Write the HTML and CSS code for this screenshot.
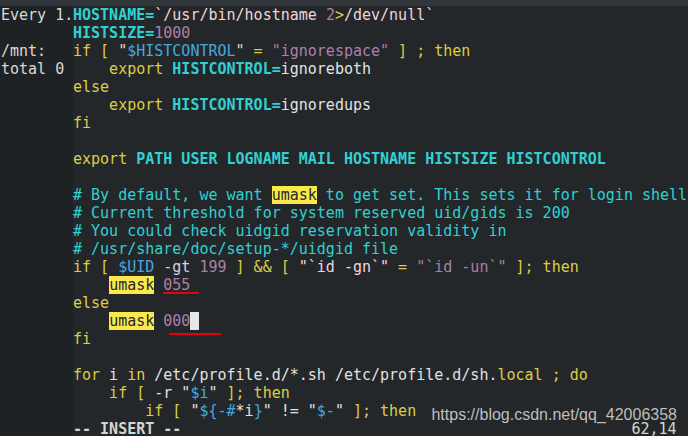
FILE: index.html
```html
<!DOCTYPE html>
<html lang="en">
<head>
    <meta charset="UTF-8">
    <title>vim /etc/profile</title>
    <link rel="stylesheet" href="styles.css">
</head>
<body>
    <div class="topbar"></div>
    <div class="panes">
        <div class="watch-pane">
            <div class="line">Every 1.</div>
            <div class="line"></div>
            <div class="line">/mnt:</div>
            <div class="line">total 0</div>
        </div>

        <div class="vim-pane">
            <div class="line"><span class="var">HOSTNAME=</span><span class="sub">`/usr/bin/hostname </span><span class="num">2</span><span class="kw">&gt;</span><span class="sub">/dev/null`</span></div>
            <div class="line"><span class="var">HISTSIZE=</span><span class="num">1000</span></div>
            <div class="line"><span class="kw">if [ </span><span class="sub">"</span><span class="ref">$HISTCONTROL</span><span class="sub">"</span><span class="kw"> = </span><span class="num">"ignorespace"</span><span class="kw"> ] ; then</span></div>
            <div class="line"><span class="kw">    export </span><span class="var">HISTCONTROL=</span><span class="txt">ignoreboth</span></div>
            <div class="line"><span class="kw">else</span></div>
            <div class="line"><span class="kw">    export </span><span class="var">HISTCONTROL=</span><span class="txt">ignoredups</span></div>
            <div class="line"><span class="kw">fi</span></div>
            <div class="line"></div>
            <div class="line"><span class="kw">export</span><span class="var"> PATH USER LOGNAME MAIL HOSTNAME HISTSIZE HISTCONTROL</span></div>
            <div class="line"></div>
            <div class="line comment"># By default, we want <span class="search">umask</span> to get set. This sets it for login shell</div>
            <div class="line comment"># Current threshold for system reserved uid/gids is 200</div>
            <div class="line comment"># You could check uidgid reservation validity in</div>
            <div class="line comment"># /usr/share/doc/setup-*/uidgid file</div>
            <div class="line"><span class="kw">if [ </span><span class="ref">$UID</span><span class="opt"> -gt </span><span class="num">199</span><span class="kw"> ] &amp;&amp; [ </span><span class="sub">"`id -gn`"</span><span class="kw"> = </span><span class="num">"`id -un`"</span><span class="kw"> ]; then</span></div>
            <div class="line">    <span class="search">umask</span> <span class="marked short"><span class="num">055</span> </span></div>
            <div class="line"><span class="kw">else</span></div>
            <div class="line">    <span class="search">umask</span> <span class="marked long"><span class="num">000</span><span class="cursor"> </span> </span></div>
            <div class="line"><span class="kw">fi</span></div>
            <div class="line"></div>
            <div class="line"><span class="kw">for</span><span class="txt"> i </span><span class="kw">in</span><span class="txt"> /etc/profile.d/*.sh /etc/profile.d/sh.</span><span class="kw">local ; do</span></div>
            <div class="line"><span class="kw">    if [ </span><span class="txt">-r "</span><span class="ref">$i</span><span class="txt">"</span><span class="kw"> ]; then</span></div>
            <div class="line"><span class="kw">        if [ </span><span class="txt">"</span><span class="ref">${-#</span><span class="txt">*i</span><span class="ref">}</span><span class="txt">" != "</span><span class="ref">$-</span><span class="txt">"</span><span class="kw"> ]; then</span></div>
            <div class="line status"><span class="mode">-- INSERT --</span><span class="ruler">62,14</span></div>
        </div>
    </div>

    <div class="watermark">https://blog.csdn.net/qq_42006358</div>
</body>
</html>
```

FILE: styles.css
```css
:root {
    --bg: #23272a;
    --bg-side: #1e2225;
    --bar: #2f3538;
    --text: #d8dad4;
    --cyan: #31d0d3;
    --yellow: #ddcd45;
    --purple: #ad7fa8;
    --pink: #efd6d8;
    --blue: #45a8e0;
    --search: #fbe84d;
    --mark: #e8000f;
}

body {
    margin: 0;
    height: 436px;
    overflow: hidden;
    background-color: var(--bg);
    color: var(--text);
    font-family: 'DejaVu Sans Mono', 'Liberation Mono', monospace;
    font-size: 15px;
    position: relative;
}

.topbar {
    height: 6px;
    background-color: var(--bar);
}

.panes {
    display: flex;
}

.watch-pane {
    width: 72px;
    padding-left: 1px;
    background-color: var(--bg-side);
    min-height: 430px;
}

.vim-pane {
    flex: 1;
}

.line {
    height: 18px;
    line-height: 18px;
    white-space: pre;
}

.var {
    color: var(--cyan);
    font-weight: bold;
}

.kw {
    color: var(--yellow);
}

.num {
    color: var(--purple);
}

.sub {
    color: var(--pink);
}

.ref {
    color: var(--blue);
}

.opt {
    color: #dcd0da;
}

.txt {
    color: #e2e2e2;
}

.comment {
    color: var(--cyan);
}

.search {
    background-color: var(--search);
    color: #24282a;
}

.marked {
    position: relative;
}

.marked::after {
    content: "";
    position: absolute;
    height: 2px;
    background-color: var(--mark);
}

.marked.short::after {
    left: 0;
    right: 0;
    top: 16px;
}

.marked.long::after {
    left: 6px;
    right: -13px;
    top: 21px;
}

.cursor {
    background-color: #e6e6e6;
}

.status {
    display: flex;
}

.mode {
    font-weight: bold;
    color: #d3d7cf;
}

.ruler {
    margin-left: 450px;
    color: #d3d7cf;
}

.watermark {
    position: absolute;
    right: 11px;
    top: 406px;
    font-family: 'Liberation Sans', Arial, sans-serif;
    font-size: 16px;
    color: rgba(220, 220, 220, 0.85);
}
```
